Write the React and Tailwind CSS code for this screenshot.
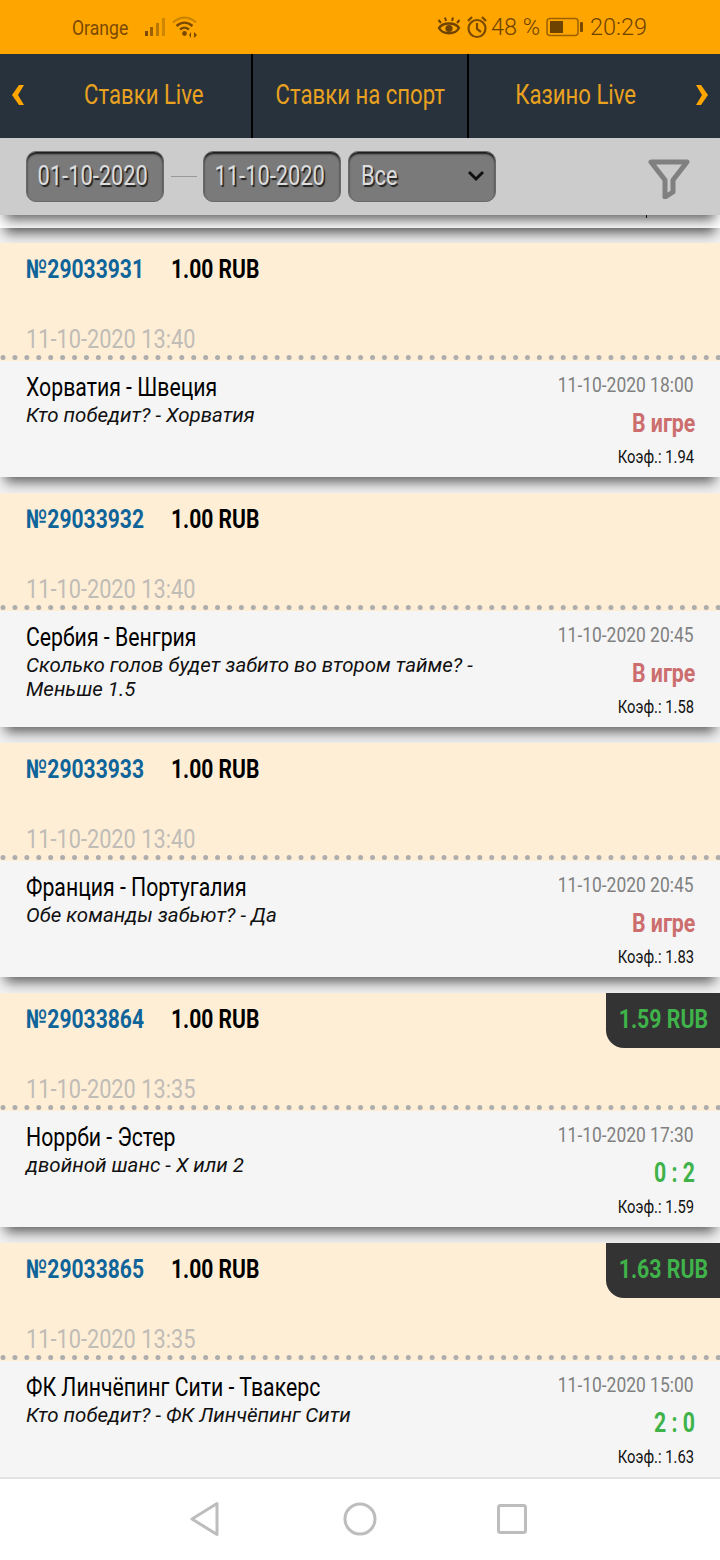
function L({ s = "scale-x-[.82]", className = "", children }) {
  return <span className={`inline-block whitespace-nowrap origin-left ${s} ${className}`}>{children}</span>;
}
function R({ s = "scale-x-[.82]", className = "", children }) {
  return <span className={`inline-block whitespace-nowrap origin-right ${s} ${className}`}>{children}</span>;
}
function C({ s = "scale-x-[.82]", className = "", children }) {
  return <span className={`inline-block whitespace-nowrap origin-center ${s} ${className}`}>{children}</span>;
}

const cards = [
  { id: "29033931", created: "11-10-2020 13:40", match: "Хорватия - Швеция", sub: ["Кто победит? - Хорватия"], date: "11-10-2020 18:00", status: "В игре", coef: "1.94" },
  { id: "29033932", created: "11-10-2020 13:40", match: "Сербия - Венгрия", sub: ["Сколько голов будет забито во втором тайме? -", "Меньше 1.5"], date: "11-10-2020 20:45", status: "В игре", coef: "1.58" },
  { id: "29033933", created: "11-10-2020 13:40", match: "Франция - Португалия", sub: ["Обе команды забьют? - Да"], date: "11-10-2020 20:45", status: "В игре", coef: "1.83" },
  { id: "29033864", created: "11-10-2020 13:35", match: "Норрби - Эстер", sub: ["двойной шанс - X или 2"], date: "11-10-2020 17:30", score: "0 : 2", coef: "1.59", win: "1.59 RUB" },
  { id: "29033865", created: "11-10-2020 13:35", match: "ФК Линчёпинг Сити - Твакерс", sub: ["Кто победит? - ФК Линчёпинг Сити"], date: "11-10-2020 15:00", score: "2 : 0", coef: "1.63", win: "1.63 RUB" },
];

function Dots() {
  return (
    <svg width="720" height="5" className="block absolute left-0 top-[112px]">
      {Array.from({ length: 61 }, (_, i) => (
        <circle key={i} cx={3 + i * 11.92} cy="2.5" r="2.5" fill="#adadad" />
      ))}
    </svg>
  );
}

function Card({ c }) {
  return (
    <div className="h-[250px] flex flex-col shrink-0">
      <div className="h-[234px] flex flex-col shadow-[0_10px_12px_-5px_rgba(0,0,0,0.62)]">
        <div className="relative h-[118px] bg-[#ffeed6] px-[26px] shrink-0">
          <div className="flex pt-[10px] text-[26px] leading-[32px] font-bold">
            <L s="scale-x-[.81]" className="w-[145px] text-[#0f6499]">№{c.id}</L>
            <L s="scale-x-[.81]" className="text-black">1.00 RUB</L>
          </div>
          <div className="absolute left-[26px] top-[81px] text-[25px] leading-[32px] text-[#c0bcb6]">
            <L s="scale-x-[.87]">{c.created}</L>
          </div>
          {c.win && (
            <div className="absolute right-0 top-0 h-[55px] w-[114px] pb-[3px] bg-[#333333] rounded-bl-[18px] flex items-center justify-end pr-[12px] text-[26px] font-bold text-[#3fb24a]">
              <R s="scale-x-[.82]">{c.win}</R>
            </div>
          )}
          <Dots />
        </div>
        <div className="relative flex-1 bg-[#f5f5f5] px-[26px] flex justify-between">
          <div className="pt-[11px]">
            <div className="text-[25px] leading-[32px] text-black"><L s="scale-x-[.85]">{c.match}</L></div>
            <div className="text-[20.5px] leading-[24px] italic text-[#111111] -mt-[1px]">
              {c.sub.map((s) => (
                <div key={s} className="whitespace-nowrap">{s}</div>
              ))}
            </div>
          </div>
          <div className="flex flex-col items-end pt-[12px]">
            <div className="text-[21px] leading-[24px] text-[#808080]"><R s="scale-x-[.83]">{c.date}</R></div>
            {c.status ? (
              <div className="text-[26px] leading-[32px] mt-[10px] font-bold text-[#cc6e6e] -mr-[1px]"><R s="scale-x-[.82]">{c.status}</R></div>
            ) : (
              <div className="text-[28px] leading-[32px] mt-[10px] font-bold text-[#3fb24a] -mr-[1px]"><R s="scale-x-[.76]">{c.score}</R></div>
            )}
            <div className="text-[18px] leading-[20px] mt-[8px] text-[#111111]"><R>Коэф.: {c.coef}</R></div>
          </div>
        </div>
      </div>
    </div>
  );
}

function DateBox({ children }) {
  return (
    <div className="w-[138px] h-[51px] rounded-[10px] bg-[#7a7a7a] border border-[#6a6a6a] shadow-[inset_0_2px_2px_rgba(0,0,0,0.8)] flex items-center justify-center pr-[4px] pb-[2px] text-[28px] text-[#dcdcdc] [text-shadow:2px_2px_1px_#222]">
      <C s="scale-x-[.78]">{children}</C>
    </div>
  );
}

export default function App() {
  return (
    <div className="w-[720px] h-[1560px] overflow-hidden bg-white flex flex-col [font-family:Roboto,sans-serif]">
      <div className="h-[54px] shrink-0 bg-[#ffa500] flex items-center text-[#7a4a00]">
        <div className="ml-[72px] w-[72px] text-[20px] leading-[24px] mt-[2px]"><L s="scale-x-[.88]">Orange</L></div>
        <svg width="24" height="22" viewBox="0 0 24 22">
          <rect x="1" y="15" width="3" height="5" fill="#7a4a00" />
          <rect x="6" y="11" width="3" height="9" fill="#7a4a00" opacity="0.75" />
          <rect x="12" y="7" width="3" height="13" fill="#b87700" />
          <rect x="18" y="2" width="3" height="18" fill="#cf8600" />
        </svg>
        <svg width="28" height="24" viewBox="0 0 28 24" className="ml-[3px]" fill="none">
          <path d="M2 7.500 C9 1 18 1 25 7.500" stroke="#c98400" strokeWidth="2.200" />
          <path d="M5.500 11 C10.500 6.500 16.500 6.500 21.500 11" stroke="#7a4a00" strokeWidth="2.400" />
          <path d="M9 14.500 C12 12 15 12 18 14.500" stroke="#7a4a00" strokeWidth="2.400" />
          <circle cx="13.500" cy="18.500" r="2.400" fill="#7a4a00" />
          <path d="M20 17l-2 3 2 3zM23 17l3 3-3 3z" fill="#7a4a00" />
        </svg>
        <svg width="24" height="24" viewBox="0 0 24 24" className="ml-[238px]" fill="none" stroke="#6e4300">
          <path d="M2 13 C6 7 18 7 22 13 C18 20 6 20 2 13Z" strokeWidth="2.400" />
          <circle cx="12" cy="13.500" r="3.600" fill="#6e4300" stroke="none" />
          <path d="M4 8 1.500 5M9 6 8 2.500M15 6 16 2.500M20 8 22.500 5" strokeWidth="2" />
        </svg>
        <svg width="22" height="24" viewBox="0 0 22 24" className="ml-[5px]" fill="none" stroke="#7a4a00" strokeWidth="2.200">
          <circle cx="11" cy="13.500" r="8.500" />
          <path d="M11 8v6l4 3M2 6l4-4M20 6l-4-4" />
        </svg>
        <div className="ml-[3px] text-[23.500px] leading-[30px] font-light text-[#6e4300] whitespace-nowrap w-[55px]">48 %</div>
        <svg width="38" height="20" viewBox="0 0 38 20" fill="none">
          <rect x="1" y="1.500" width="31" height="17" rx="3" stroke="#9a6200" strokeWidth="1.500" />
          <rect x="4" y="4" width="13" height="12" fill="#6e4300" />
          <rect x="34" y="5" width="3" height="10" rx="1" fill="#7a4a00" />
        </svg>
        <div className="ml-[6px] text-[23.500px] leading-[30px] font-light text-[#6e4300]">20:29</div>
      </div>

      <div className="h-[84px] shrink-0 bg-[#28323c] flex text-[#e9a21f] text-[27px] pb-[2px]">
        <div className="w-[251px] flex items-center shrink-0">
          <svg width="14" height="20" viewBox="0 0 14 20" className="ml-[11px]"><path d="M8 0h5L7 10l6 10H8L1 10z" fill="#ffa500" /></svg>
          <div className="flex-1 text-center pl-[12px]"><C>Ставки Live</C></div>
        </div>
        <div className="w-[218px] shrink-0 -mb-[2px] pb-[2px] border-x-2 border-black flex items-center justify-center"><C>Ставки на спорт</C></div>
        <div className="flex-1 flex items-center">
          <div className="flex-1 text-center pr-[13px]"><C>Казино Live</C></div>
          <svg width="14" height="20" viewBox="0 0 14 20" className="mr-[11px]"><path d="M6 0H1l6 10-6 10h5l7-10z" fill="#ffa500" /></svg>
        </div>
      </div>

      <div className="relative z-10 h-[77px] shrink-0 bg-[#cccccc] flex items-start pt-[13px] pl-[26px] shadow-[0_10px_12px_-5px_rgba(0,0,0,0.62)]">
        <DateBox>01-10-2020</DateBox>
        <div className="w-[26px] h-[1px] bg-[#999999] mx-[6px] ml-[7px] mt-[25px]"></div>
        <DateBox>11-10-2020</DateBox>
        <div className="relative ml-[7px] w-[148px] h-[51px] rounded-[10px] bg-[#7a7a7a] border border-[#6a6a6a] shadow-[inset_0_2px_2px_rgba(0,0,0,0.8)] flex items-center pl-[12px] pb-[2px] text-[28px] text-[#dcdcdc] [text-shadow:2px_2px_1px_#222]">
          <L s="scale-x-[.78]">Все</L>
          <svg width="18" height="12" viewBox="0 0 18 12" className="absolute right-[10px] top-[18px]" fill="none"><path d="M2 2l7 7 7-7" stroke="#111" strokeWidth="3" /></svg>
        </div>
        <svg width="42" height="40" viewBox="0 0 42 40" className="ml-[152px] mt-[8px]" fill="none">
          <path d="M3 3h36L25 21v12l-8 5V21z" stroke="#808080" strokeWidth="5" strokeLinejoin="round" />
        </svg>
      </div>

      <div className="flex-1 min-h-0 overflow-hidden bg-[#f2f2f2]">
        <div className="relative h-[60px] -mt-[47px] bg-white shadow-[0_10px_12px_-5px_rgba(0,0,0,0.62)]">
          <span className="absolute left-[646px] bottom-[10px] w-[1px] h-[3px] bg-[#222222]"></span>
        </div>
        <div className="h-[15px]"></div>
        {cards.map((c) => (
          <Card key={c.id} c={c} />
        ))}
      </div>

      <div className="relative z-10 h-[83px] shrink-0 bg-white border-t-2 border-[#e3e3e3] flex items-center justify-center pb-[2px] pr-[2px]">
        <svg width="32" height="36" viewBox="0 0 32 36" className="ml-[-3px]" fill="none">
          <path d="M28 2.500 3 18l25 15.500z" stroke="#bdbdbd" strokeWidth="3" strokeLinejoin="round" />
        </svg>
        <svg width="34" height="34" viewBox="0 0 34 34" className="ml-[122px]" fill="none">
          <circle cx="17" cy="17" r="15" stroke="#bdbdbd" strokeWidth="3" />
        </svg>
        <svg width="30" height="30" viewBox="0 0 30 30" className="ml-[120px]" fill="none">
          <rect x="1.500" y="1.500" width="27" height="27" rx="2" stroke="#bdbdbd" strokeWidth="3" />
        </svg>
      </div>
    </div>
  );
}
